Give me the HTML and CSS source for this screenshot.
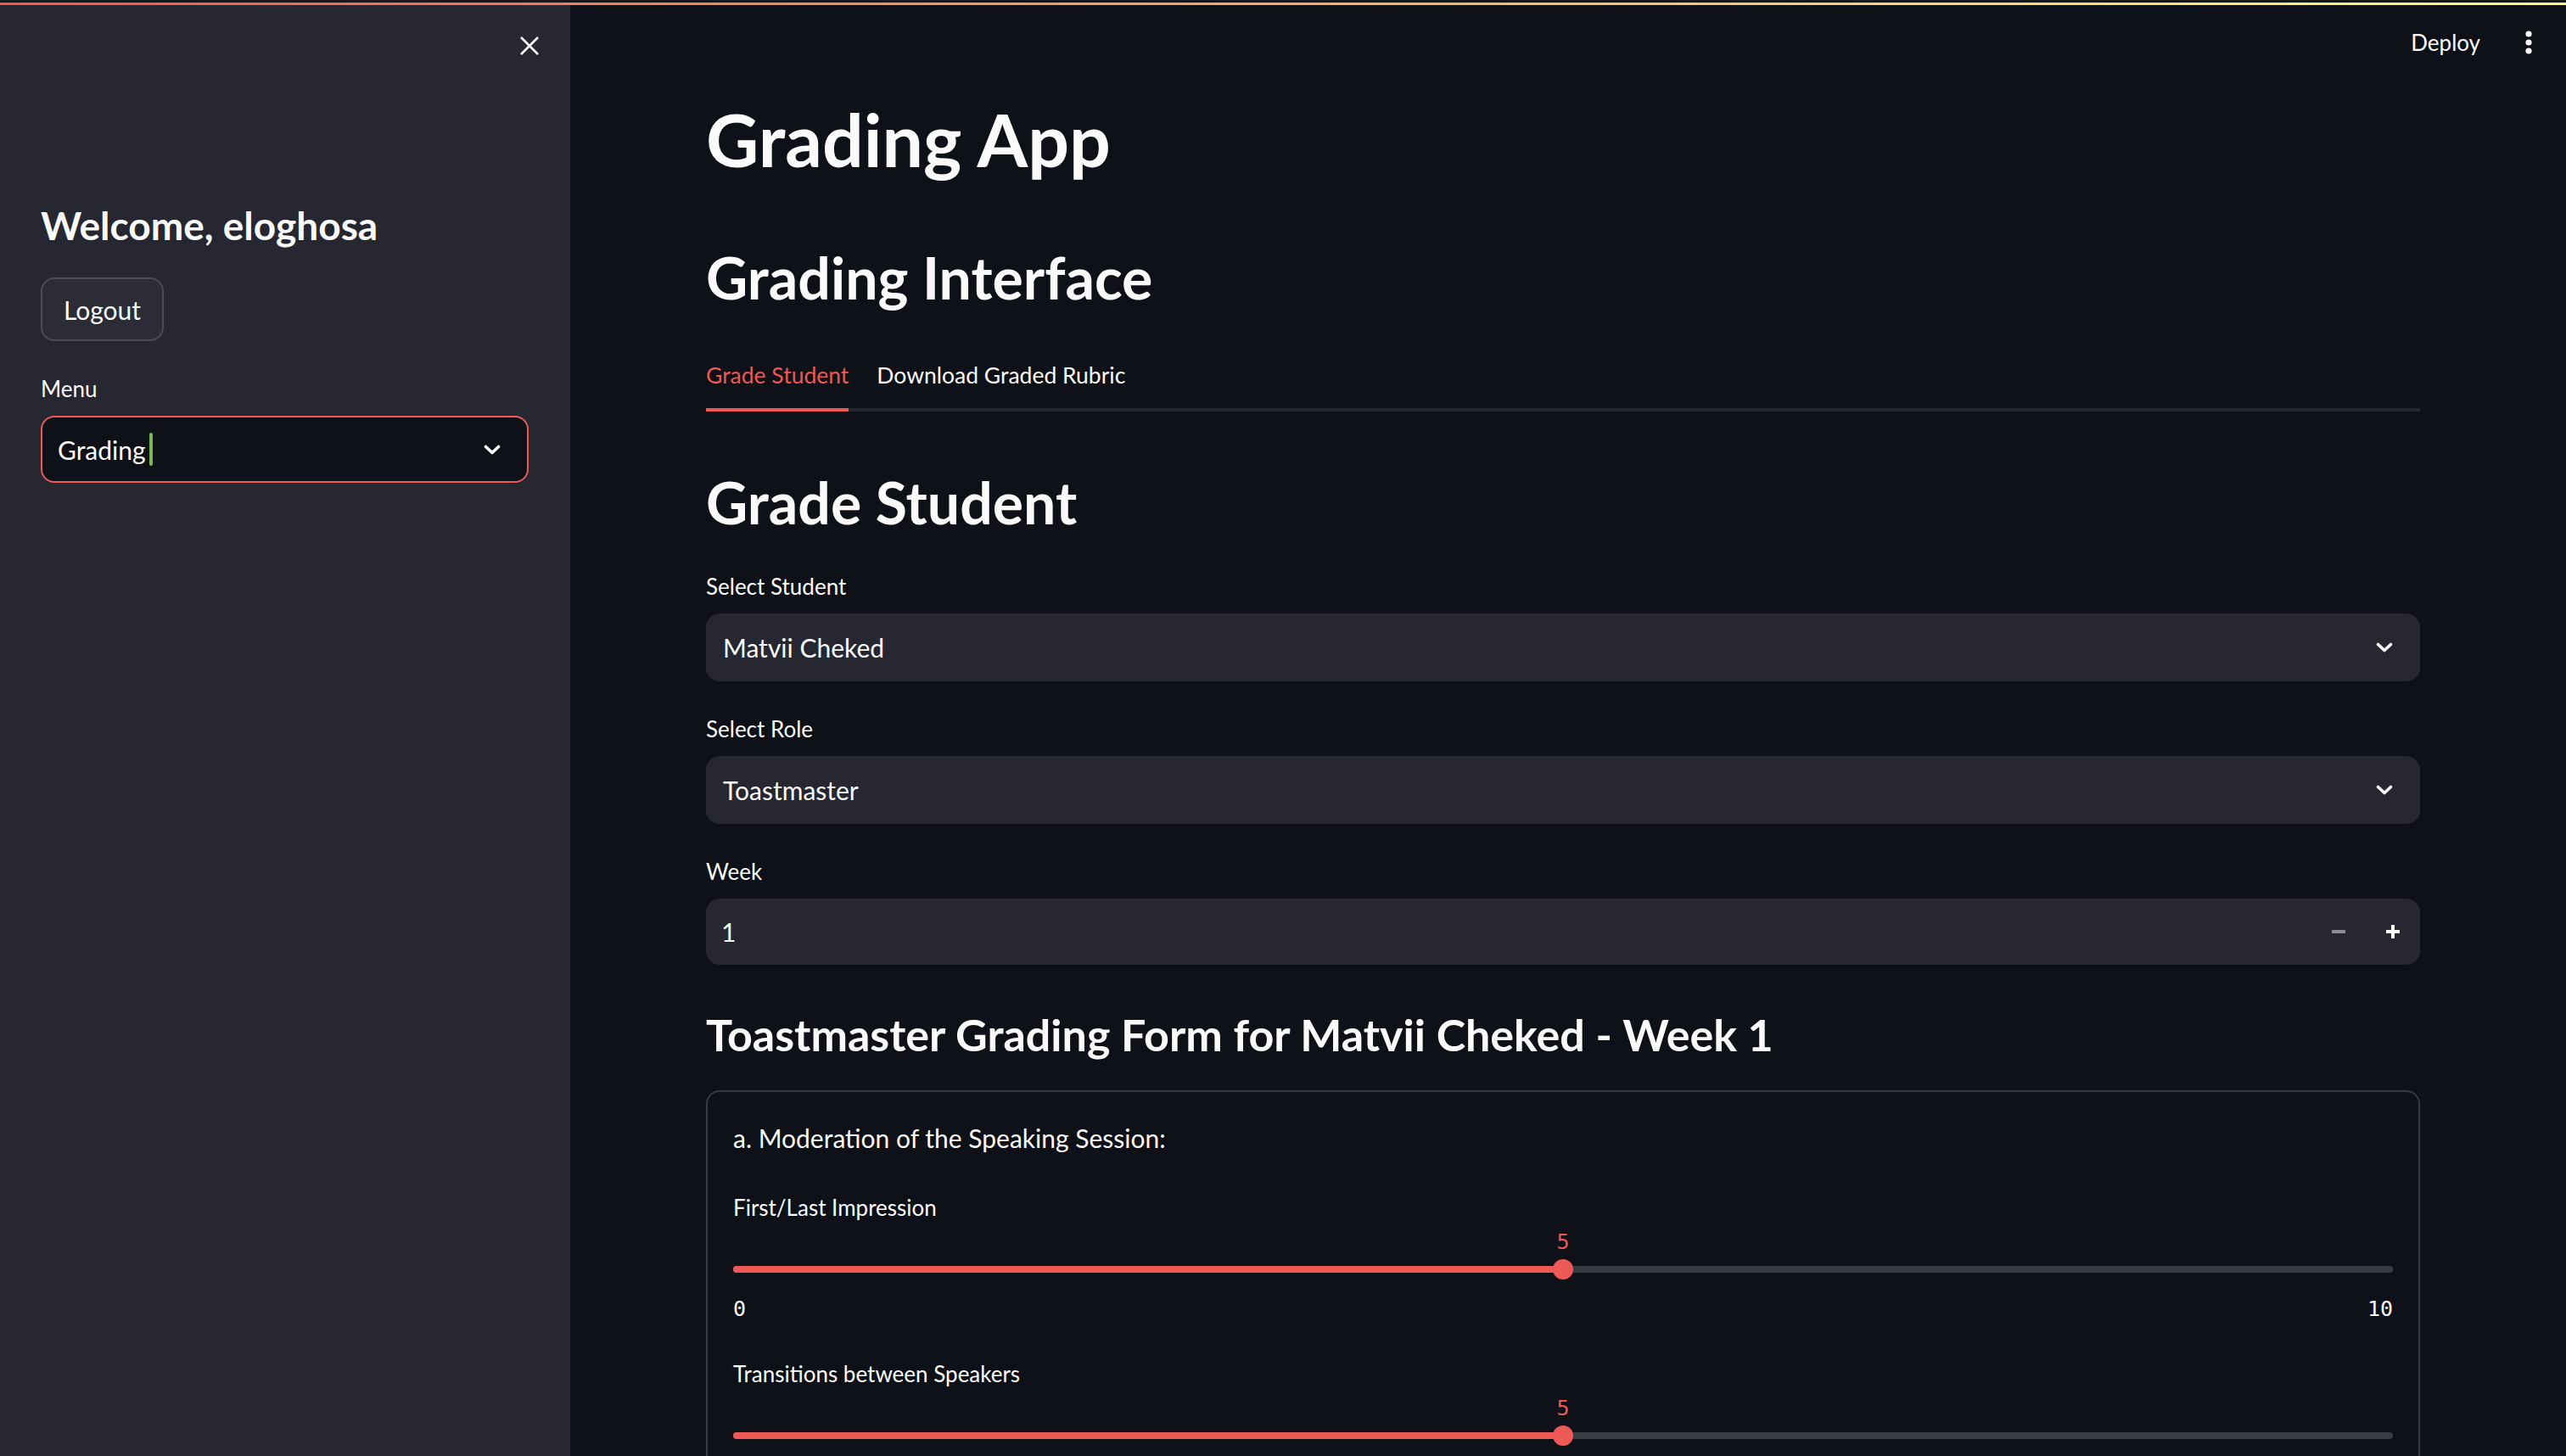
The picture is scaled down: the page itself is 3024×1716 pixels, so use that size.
FILE: index.html
```html
<!DOCTYPE html>
<html lang="en">
<head>
<meta charset="utf-8">
<title>Grading App</title>
<link rel="stylesheet" href="styles.css">
</head>
<body>
<div class="decoration"></div>
<div class="app">
  <aside class="sidebar">
    <div class="sidebar-header">
      <button class="icon-btn" aria-label="Close sidebar">
        <svg width="24" height="24" viewBox="0 0 24 24"><path d="M2 2 L22 22 M22 2 L2 22" stroke="#fafafa" stroke-width="2.6" fill="none"/></svg>
      </button>
    </div>
    <div class="sidebar-content">
      <h1 class="side-title">Welcome, eloghosa</h1>
      <button class="btn">Logout</button>
      <div class="widget side-widget">
        <label class="wlabel">Menu</label>
        <div class="select select-focus">
          <span class="value">Grading<span class="caret"></span></span>
          <svg class="chev" width="20" height="12" viewBox="0 0 20 12"><path d="M2.5 2.5 L10 9.5 L17.5 2.5" stroke="#fafafa" stroke-width="3.6" fill="none" stroke-linecap="round" stroke-linejoin="round"/></svg>
        </div>
      </div>
    </div>
  </aside>
  <main class="main">
    <header class="topbar">
      <span class="deploy">Deploy</span>
      <button class="icon-btn" aria-label="Main menu">
        <svg width="8" height="28" viewBox="0 0 8 28"><circle cx="4" cy="4" r="3.6" fill="#fafafa"/><circle cx="4" cy="14" r="3.6" fill="#fafafa"/><circle cx="4" cy="24" r="3.6" fill="#fafafa"/></svg>
      </button>
    </header>
    <div class="block">
      <h1 class="title">Grading App</h1>
      <h2 class="h2 h2-first">Grading Interface</h2>
      <div class="tabs">
        <div class="tab active">Grade Student</div>
        <div class="tab">Download Graded Rubric</div>
      </div>
      <h2 class="h2 h2-second">Grade Student</h2>

      <div class="widget w-first">
        <label class="wlabel">Select Student</label>
        <div class="select">
          <span class="value">Matvii Cheked</span>
          <svg class="chev" width="20" height="12" viewBox="0 0 20 12"><path d="M2.5 2.5 L10 9.5 L17.5 2.5" stroke="#fafafa" stroke-width="3.6" fill="none" stroke-linecap="round" stroke-linejoin="round"/></svg>
        </div>
      </div>

      <div class="widget">
        <label class="wlabel">Select Role</label>
        <div class="select">
          <span class="value">Toastmaster</span>
          <svg class="chev" width="20" height="12" viewBox="0 0 20 12"><path d="M2.5 2.5 L10 9.5 L17.5 2.5" stroke="#fafafa" stroke-width="3.6" fill="none" stroke-linecap="round" stroke-linejoin="round"/></svg>
        </div>
      </div>

      <div class="widget">
        <label class="wlabel">Week</label>
        <div class="number">
          <span class="num-value">1</span>
          <span class="step step-disabled">
            <svg width="16" height="16" viewBox="0 0 16 16"><path d="M0 8 H16" stroke="#8b8c97" stroke-width="4"/></svg>
          </span>
          <span class="step">
            <svg width="16" height="16" viewBox="0 0 16 16"><path d="M0 8 H16 M8 0 V16" stroke="#fafafa" stroke-width="4"/></svg>
          </span>
        </div>
      </div>

      <h3 class="h3">Toastmaster Grading Form for Matvii Cheked - Week 1</h3>

      <div class="form">
        <p class="para">a. Moderation of the Speaking Session:</p>

        <div class="slider-widget">
          <label class="wlabel">First/Last Impression</label>
          <div class="slider">
            <div class="thumb-row"><span class="thumb-value" style="left:50%">5</span></div>
            <div class="track">
              <div class="rail"><div class="fill" style="width:50%"></div><div class="thumb" style="left:50%"></div></div>
            </div>
            <div class="minmax"><span>0</span><span>10</span></div>
          </div>
        </div>

        <div class="slider-widget">
          <label class="wlabel">Transitions between Speakers</label>
          <div class="slider">
            <div class="thumb-row"><span class="thumb-value" style="left:50%">5</span></div>
            <div class="track">
              <div class="rail"><div class="fill" style="width:50%"></div><div class="thumb" style="left:50%"></div></div>
            </div>
            <div class="minmax"><span>0</span><span>10</span></div>
          </div>
        </div>
      </div>
    </div>
  </main>
</div>
</body>
</html>
```

FILE: styles.css
```css
* { box-sizing: border-box; }
html, body { margin: 0; padding: 0; }
body {
  width: 3024px;
  height: 1716px;
  overflow: hidden;
  background: #0e1117;
  color: #fafafa;
  font-family: Lato, "Noto Sans", sans-serif;
}
.decoration {
  position: fixed;
  top: 0; left: 0; right: 0;
  height: 6px;
  border-top: 3px solid #17181c;
  background: linear-gradient(90deg, #ed5954, #fffd80);
  z-index: 10;
}
.app { display: flex; height: 1716px; }

/* sidebar */
.sidebar {
  width: 672px;
  flex: none;
  background: #262730;
  display: flex;
  flex-direction: column;
}
.sidebar-header {
  display: flex;
  justify-content: flex-end;
  padding: 30px 24px 0 0;
}
.icon-btn {
  width: 48px; height: 48px;
  display: flex; align-items: center; justify-content: center;
  background: none; border: 0; padding: 0; margin: 0;
}
.sidebar-content {
  padding: 160px 49px 0 48px;
  display: flex;
  flex-direction: column;
  align-items: flex-start;
}
.side-title {
  font-size: 46px;
  line-height: 56px;
  font-weight: 700;
  margin: 0 0 33px;
}
.btn {
  font-family: inherit;
  font-size: 30px;
  color: #fafafa;
  background: #2b2c36;
  border: 2px solid #4b4c56;
  border-radius: 16px;
  height: 75px;
  padding: 0 25px;
}
.side-widget { align-self: stretch; margin-top: 32px; }

/* widgets */
.widget { display: flex; flex-direction: column; }
.wlabel {
  font-size: 26px;
  line-height: 48px;
  height: 48px;
  margin-bottom: 8px;
  color: #fafafa;
}
.select {
  height: 80px;
  background: #262730;
  border: 2px solid #262730;
  border-radius: 16px;
  display: flex;
  align-items: center;
  justify-content: space-between;
  padding: 0 30px 0 18px;
}
.select-focus {
  height: 79px;
  background: #0e1117;
  border-color: #ed5954;
  padding-right: 31px;
}
.value {
  font-size: 30px;
  display: flex;
  align-items: center;
}
.caret {
  display: inline-block;
  width: 4px;
  height: 39px;
  border-radius: 2px;
  background: #76b852;
  margin-left: 4px;
}

/* main */
.main { flex: 1; min-width: 0; display: flex; flex-direction: column; }
.topbar {
  height: 100px;
  flex: none;
  display: flex;
  align-items: center;
  justify-content: flex-end;
  padding-right: 20px;
  gap: 9px;
}
.deploy { font-size: 26px; padding: 0 24px; }
.block {
  padding: 12px 172px 0 160px;
  display: flex;
  flex-direction: column;
}
.title {
  font-size: 86px;
  line-height: 104px;
  font-weight: 700;
  margin: 0;
}
.h2 {
  font-size: 68px;
  line-height: 84px;
  font-weight: 700;
  margin: 0;
}
.h2-first { margin-top: 69px; }
.h2-second { margin-top: 65px; }
.tabs {
  display: flex;
  gap: 33px;
  margin-top: 53px;
  border-bottom: 4px solid #26272f;
}
.tab {
  font-size: 26.5px;
  line-height: 40px;
  padding-bottom: 19px;
  margin-bottom: -4px;
  border-bottom: 4px solid transparent;
}
.tab.active { color: #ed5954; border-bottom-color: #ed5954; }
.widget { margin-top: 32px; }
.w-first { margin-top: 33px; }
.number {
  height: 78px;
  background: #262730;
  border-radius: 16px;
  display: flex;
  align-items: center;
}
.num-value { flex: 1; font-size: 30px; padding-left: 18px; }
.step {
  width: 64px;
  height: 100%;
  display: flex;
  align-items: center;
  justify-content: center;
}
.h3 {
  font-size: 52px;
  line-height: 64px;
  font-weight: 700;
  margin: 50px 0 0;
}
.form {
  margin-top: 34px;
  border: 2px solid #393a40;
  border-radius: 16px;
  padding: 30px 30px 40px;
  height: 600px;
}
.para { font-size: 30px; line-height: 48px; margin: 0; }
.slider-widget { margin-top: 34px; display: flex; flex-direction: column; }
.slider-widget + .slider-widget { margin-top: 38px; }
.slider-widget .wlabel { margin-bottom: 0; }
.slider { display: flex; flex-direction: column; }
.thumb-row { position: relative; height: 30px; padding-top: 2px; }
.thumb-value {
  position: absolute;
  top: 3px;
  transform: translateX(-50%);
  font-family: "DejaVu Sans Mono", monospace;
  font-size: 25px;
  line-height: 28px;
  color: #ed5954;
}
.track { height: 24px; margin-top: 7px; display: flex; align-items: center; }
.rail {
  position: relative;
  width: 100%;
  height: 8px;
  border-radius: 4px;
  background: #3a3c44;
}
.fill { height: 100%; border-radius: 4px; background: #ed5954; }
.thumb {
  position: absolute;
  top: 50%;
  width: 24px; height: 24px;
  margin: -12px 0 0 -12px;
  border-radius: 50%;
  background: #ed5954;
}
.minmax {
  margin-top: 21px;
  display: flex;
  justify-content: space-between;
  font-family: "DejaVu Sans Mono", monospace;
  font-size: 25px;
  line-height: 28px;
}
```
